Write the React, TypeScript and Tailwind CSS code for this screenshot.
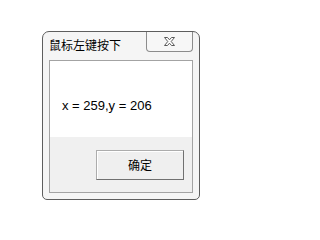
export default function App() {
  return (
    <div className="w-[251px] h-[219px] bg-white pt-[31px] pl-[42px]">
      {/* dialog frame */}
      <div className="w-[158px] h-[169px] border border-[#5e5e5e] rounded-t-[7px] rounded-b-[5px] bg-[#f5f5f5] flex flex-col px-[6px] pb-[6px]">
        {/* title bar */}
        <div className="h-[28px] flex justify-between items-start">
          <span className="pt-[5px] text-[12px] leading-[16px] text-black font-['Noto_Sans_CJK_SC',sans-serif]">
            鼠标左键按下
          </span>
          <div className="w-[47px] h-[20px] border border-t-0 border-[#8c8c8c] rounded-b-[4px] bg-[#f7f7f7] flex items-center justify-center">
            <svg width="13" height="11" viewBox="0 0 13 11">
              <path
                d="M1.5 1.5h3l2 2.3 2-2.3h3l-3.3 4 3.3 4h-3l-2-2.3-2 2.3h-3l3.3-4z"
                fill="#ffffff"
                stroke="#5a5a5a"
                strokeWidth="1"
                strokeLinejoin="round"
              />
            </svg>
          </div>
        </div>
        {/* client area */}
        <div className="flex-1 border border-[#a3a3a3] bg-[#f0f0f0] flex flex-col">
          <div className="h-[76px] bg-white pl-[12px] pt-[31px]">
            <span className="text-[13px] leading-[15px] text-black font-['Liberation_Sans',sans-serif]">
              x = 259,y = 206
            </span>
          </div>
          <div className="flex-1 flex justify-end pr-[8px] pt-[13px]">
            <button className="w-[88px] h-[30px] border border-[#acacac] border-r-[#707070] border-b-[#707070] bg-[#efefef] shadow-[inset_1px_1px_0_#ffffff] text-[12px] text-black font-['Noto_Sans_CJK_SC',sans-serif]">
              确定
            </button>
          </div>
        </div>
      </div>
    </div>
  );
}
